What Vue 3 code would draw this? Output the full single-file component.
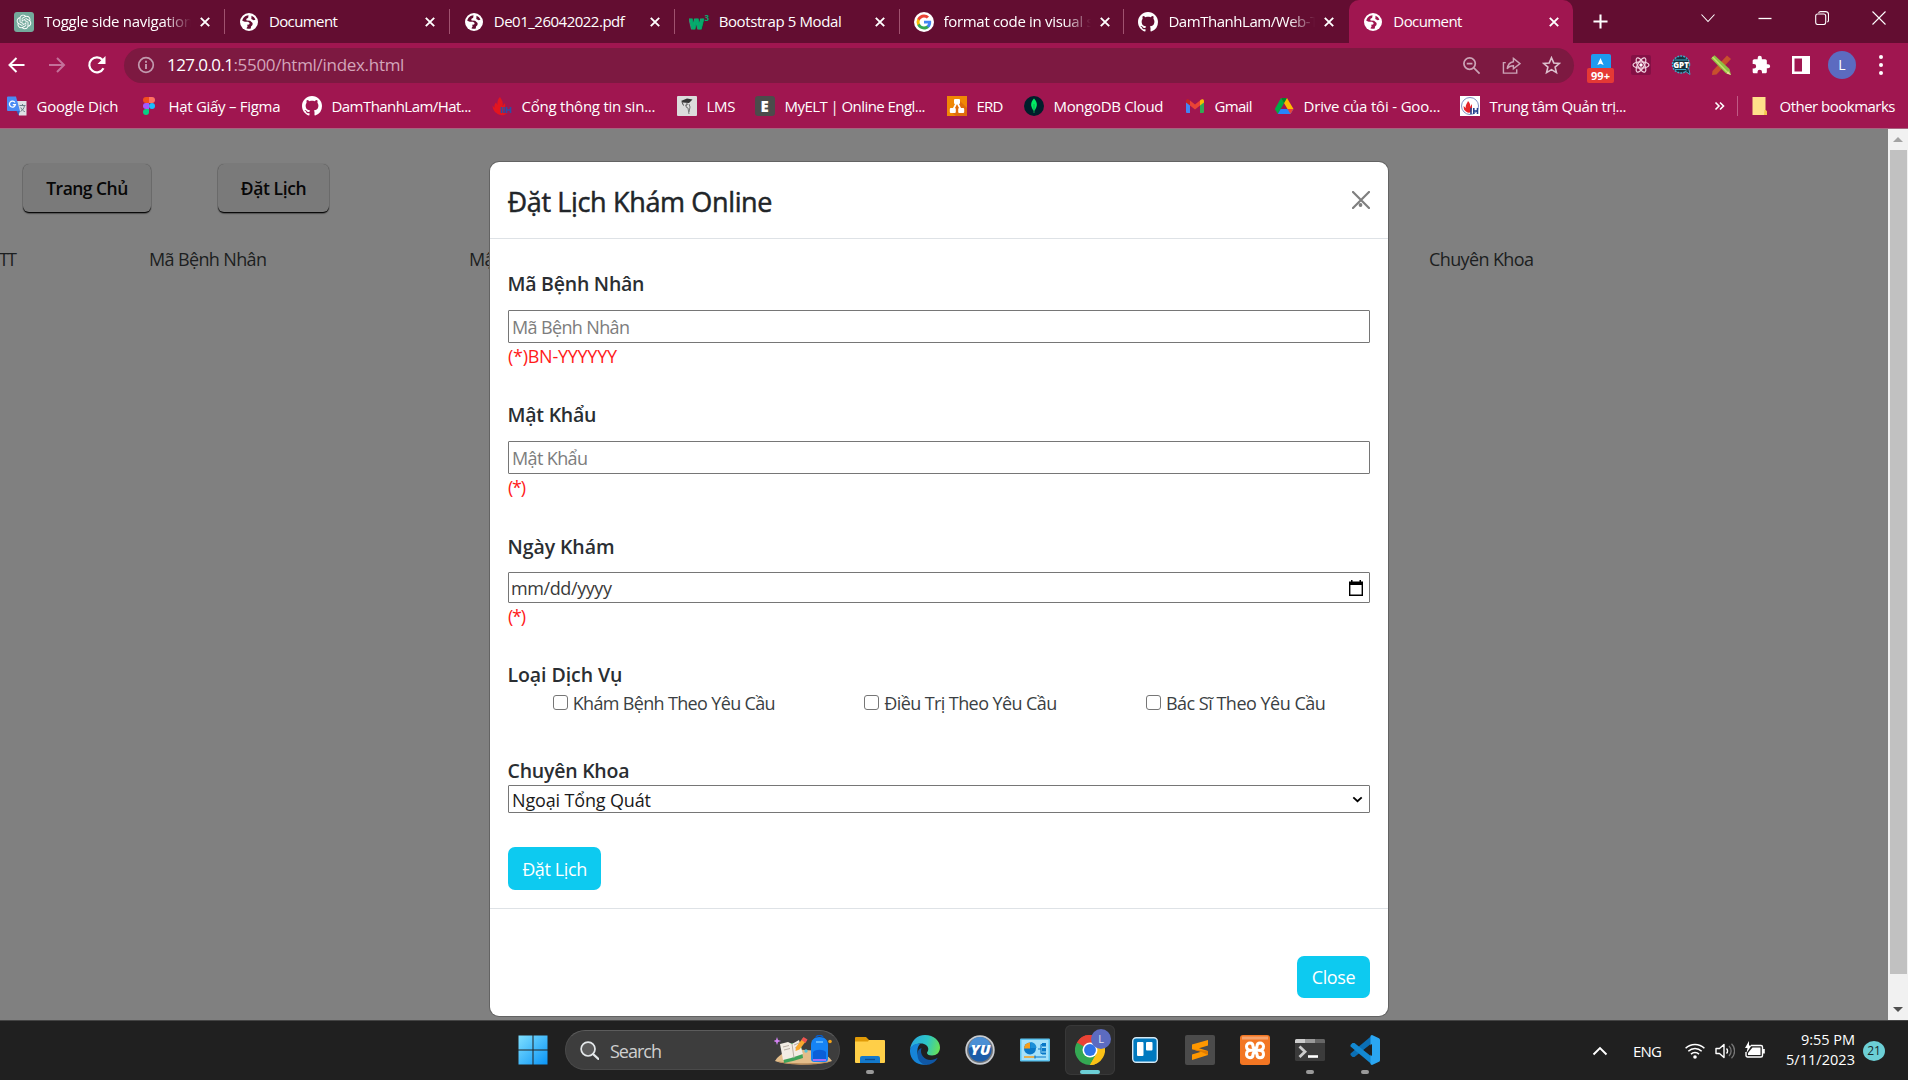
<script setup>
// Spreads or tightens a text run so that it spans the given width in pixels.
const vFit = {
  mounted(el, { value }) {
    const n = Array.from(el.textContent.trim()).length
    if (n < 2 || !value) return
    const natural = el.getBoundingClientRect().width
    el.style.letterSpacing = ((value - natural) / (n - 1)).toFixed(3) + 'px'
  }
}

const icons = {
  globe: ['0 0 18 18', '<circle cx="9" cy="9" r="9" fill="#fff"/><path d="M8.500 2.300C5.300 2.500 2.800 4.800 2.300 7.800l2.500.9 3.200.1 1.700 1.200-.6 1.500-1.900.2.400 1.700-1.200 1.800c1.200.6 3 .7 4.400.3l.2-1.900 1.500-1.500.1-2-2.500-2.300-3.500-.2-.4-1.500 2-1.400z" fill="currentColor"/><path d="M11.500 2.800c1.900.7 3.300 2 3.900 4l-1.800.5-2.300-1.200z" fill="currentColor"/>'],
  openai: ['0 0 34 34', '<rect width="34" height="34" rx="5" fill="#74aa9c"/><g transform="translate(4.500 4.500) scale(1.04)"><path fill="#fff" d="M22.2819 9.8211a5.9847 5.9847 0 0 0-.5157-4.9108 6.0462 6.0462 0 0 0-6.5098-2.9A6.0651 6.0651 0 0 0 4.9807 4.1818a5.9847 5.9847 0 0 0-3.9977 2.9 6.0462 6.0462 0 0 0 .7427 7.0966 5.98 5.98 0 0 0 .511 4.9107 6.051 6.051 0 0 0 6.5146 2.9001A5.9847 5.9847 0 0 0 13.2599 24a6.0557 6.0557 0 0 0 5.7718-4.2058 5.9894 5.9894 0 0 0 3.9977-2.9001 6.0557 6.0557 0 0 0-.7475-7.0729zm-9.022 12.6081a4.4755 4.4755 0 0 1-2.8764-1.0408l.1419-.0804 4.7783-2.7582a.7948.7948 0 0 0 .3927-.6813v-6.7369l2.02 1.1686a.071.071 0 0 1 .038.052v5.5826a4.504 4.504 0 0 1-4.4945 4.4944zm-9.6607-4.1254a4.4708 4.4708 0 0 1-.5346-3.0137l.142.0852 4.783 2.7582a.7712.7712 0 0 0 .7806 0l5.8428-3.3685v2.3324a.0804.0804 0 0 1-.0332.0615L9.74 19.9502a4.4992 4.4992 0 0 1-6.1408-1.6464zM2.3408 7.8956a4.485 4.485 0 0 1 2.3655-1.9728V11.6a.7664.7664 0 0 0 .3879.6765l5.8144 3.3543-2.0201 1.1685a.0757.0757 0 0 1-.071 0l-4.8303-2.7865A4.504 4.504 0 0 1 2.3408 7.872zm16.5963 3.8558L13.1038 8.364 15.1192 7.2a.0757.0757 0 0 1 .071 0l4.8303 2.7913a4.4944 4.4944 0 0 1-.6765 8.1042v-5.6772a.79.79 0 0 0-.407-.667zm2.0107-3.0231l-.142-.0852-4.7735-2.7818a.7759.7759 0 0 0-.7854 0L9.409 9.2297V6.8974a.0662.0662 0 0 1 .0284-.0615l4.8303-2.7866a4.4992 4.4992 0 0 1 6.6802 4.66zM8.3065 12.863l-2.02-1.1638a.0804.0804 0 0 1-.038-.0567V6.0742a4.4992 4.4992 0 0 1 7.3757-3.4537l-.142.0805L8.704 5.459a.7948.7948 0 0 0-.3927.6813zm1.0976-2.3654l2.602-1.4998 2.6069 1.4998v2.9994l-2.5974 1.4997-2.6067-1.4997Z"/></g>'],
  w3: ['0 0 20 20', '<text x="0" y="16.500" font-family="Open Sans, sans-serif" font-weight="800" font-size="17" textLength="15" lengthAdjust="spacingAndGlyphs" fill="#04aa6d" stroke="#04aa6d">w</text><text x="15.500" y="9" font-family="Open Sans, sans-serif" font-weight="700" font-size="8" fill="#04aa6d">3</text>'],
  google: ['0 0 32 32', '<circle cx="16" cy="16" r="16" fill="#fff"/><g transform="translate(4 4)"><path fill="#4285F4" d="M23.490 12.270c0-.79-.07-1.540-.19-2.270H12v4.510h6.470c-.29 1.480-1.140 2.730-2.400 3.580v3h3.860c2.260-2.090 3.560-5.170 3.560-8.820z"/><path fill="#34A853" d="M12 24c3.240 0 5.950-1.080 7.930-2.910l-3.860-3c-1.080.72-2.450 1.160-4.070 1.160-3.130 0-5.780-2.110-6.730-4.960H1.290v3.090C3.260 21.300 7.310 24 12 24z"/><path fill="#FBBC05" d="M5.270 14.290A7.170 7.170 0 0 1 4.890 12c0-.8.140-1.570.38-2.290V6.620H1.290a11.860 11.860 0 0 0 0 10.760l3.980-3.090z"/><path fill="#EA4335" d="M12 4.750c1.770 0 3.350.61 4.600 1.800l3.420-3.420C17.950 1.190 15.240 0 12 0 7.310 0 3.260 2.700 1.290 6.620l3.980 3.090C6.220 6.860 8.870 4.750 12 4.750z"/></g>'],
  github: ['0 0 16 16', '<path fill="#fff" d="M8 0C3.58 0 0 3.58 0 8c0 3.540 2.290 6.530 5.470 7.590.4.07.55-.17.55-.38 0-.19-.01-.82-.01-1.490-2.010.37-2.530-.49-2.690-.94-.09-.23-.48-.94-.82-1.130-.28-.15-.68-.52-.01-.53.63-.01 1.080.58 1.230.82.72 1.210 1.870.87 2.330.66.07-.52.28-.87.51-1.070-1.780-.2-3.640-.89-3.640-3.950 0-.87.31-1.590.82-2.150-.08-.2-.36-1.020.08-2.120 0 0 .67-.21 2.200.82.64-.18 1.320-.27 2-.27s1.360.09 2 .27c1.530-1.040 2.200-.82 2.200-.82.44 1.100.16 1.920.08 2.120.51.56.82 1.270.82 2.150 0 3.070-1.870 3.750-3.650 3.950.29.25.54.73.54 1.480 0 1.070-.01 1.930-.01 2.200 0 .21.15.46.55.38A8.010 8.010 0 0 0 16 8c0-4.420-3.580-8-8-8z"/>'],
  translate: ['0 0 20 20', '<path d="M8 5h11.500v14.500H12z" fill="#dfe1e5"/><path d="M0 1.500A1 1 0 0 1 1 .500h8l4 14.500H1a1 1 0 0 1-1-1z" fill="#4a8af4"/><path d="M9.500 15h3.500L11.500 19.500z" fill="#3a5fc0"/><path d="M8 6.500a3 3 0 1 0 .4 2.200H5.800" fill="none" stroke="#fff" stroke-width="1.300"/><path d="M12.500 9.500h6M15.500 8v1.500M17.500 9.500c-.5 3-2 4.800-4 6M13.800 11.500c1 2 2 3.200 4 4.200" fill="none" stroke="#6b7c86" stroke-width="1"/>'],
  figma: ['0 0 20 20', '<path d="M7 1h3v6H7a3 3 0 0 1 0-6z" fill="#f24e1e"/><path d="M10 1h3a3 3 0 0 1 0 6h-3z" fill="#ff7262"/><path d="M7 7h3v6H7a3 3 0 0 1 0-6z" fill="#a259ff"/><circle cx="13" cy="10" r="3" fill="#1abcfe"/><path d="M7 13h3v3a3 3 0 1 1-3-3z" fill="#0acf83"/>'],
  flame: ['0 0 20 20', '<path d="M8 1c2 3 3.500 5.500 2.500 9l2.500-3c1 4-.5 8-2.500 9.500 1.500.8 3 .8 4.500.4-2 3-8 3-10.500.2C2 16 .500 12 .500 9.500l2 2.500C2 9 3 7.500 4 6.500L5.500 9C5 5.500 6 3 8 1z" fill="#e3151f"/><path d="M9.500 11v6M12 11v6M14.500 11v6M18.500 11v6M14.500 14h4" stroke="#2c4fa3" stroke-width="1.600"/>'],
  lms: ['0 0 20 20', '<rect width="20" height="20" rx="1" fill="#dcdcdc"/><path d="M4 5l6-2.500 5.500 1L12 7 6 6.500z" fill="#333"/><path d="M5 6l1.500 3.500" stroke="#444"/><path d="M10 7l-1 4 2 1 1 6M8 9.500l3-1.500M12 8l1 3-1 5" fill="none" stroke="#777" stroke-width="1"/>'],
  elt: ['0 0 20 20', '<rect width="20" height="20" rx="3" fill="#4b4b4b"/><text x="5.600" y="15.500" font-family="Open Sans, sans-serif" font-weight="800" font-size="15" fill="#fff">E</text>'],
  erd: ['0 0 20 20', '<rect width="20" height="20" fill="#f08705"/><path d="M12 4l8 8v8H9l-5-4z" fill="#df6c0c"/><path d="M10 6l-4 8M10 6l4 8" stroke="#fff" stroke-width="1.700"/><rect x="7" y="3" width="6" height="5" rx="1" fill="#fff"/><rect x="2.800" y="12" width="6" height="5" rx="1" fill="#fff"/><rect x="11.200" y="12" width="6" height="5" rx="1" fill="#fff"/>'],
  mongo: ['0 0 20 20', '<circle cx="10" cy="10" r="10" fill="#001e2b"/><path d="M10 2.500c3 3 4.500 7.500 0 12.500-4.500-5-3-9.500 0-12.500z" fill="#00ed64"/><path d="M10 8v9" stroke="#12a150" stroke-width=".9"/>'],
  gmail: ['0 0 20 20', '<path d="M1 5.500v10.200c0 .8.500 1.300 1.300 1.300H5V8.500z" fill="#4285f4"/><path d="M15 8.500V17h2.700c.8 0 1.300-.5 1.300-1.300V5.500z" fill="#34a853"/><path d="M5 4.500l5 4 5-4v5l-5 4-5-4z" fill="#ea4335"/><path d="M1 5.200C1 3 3 2.800 4.200 3.800L5 4.500v5L1 6.500z" fill="#c5221f"/><path d="M19 5.200C19 3 17 2.800 15.800 3.800l-.8.7v5l4-3z" fill="#fbbc04"/>'],
  drive: ['0 0 20 20', '<path d="M7 2h6l6.500 11h-6z" fill="#ffba00"/><path d="M7 2l3 5.200L3.800 18 .800 13z" fill="#00ac47"/><path d="M6.700 13h12.800l-3 5H3.800z" fill="#2684fc"/><path d="M7 2h6l-3 5.200z" fill="#00832d"/><path d="M13.500 13h6l-3 5z" fill="#ea4335"/>'],
  center: ['0 0 20 20', '<rect width="20" height="20" fill="#fff"/><circle cx="10" cy="10" r="8.500" fill="none" stroke="#7f8fc4" stroke-width="1"/><path d="M8 5c2 2 2.500 4 2 6l2-3v4l-1 4c-2 1.500-5 .5-7-2.500L3.500 10l2.300 2C5.500 8.500 7 8 8 5z" fill="#e3252b"/><path d="M11 12v6M13.800 12v6M17.500 12v6M13.800 15h3.700" stroke="#23408f" stroke-width="1.600"/>'],
  folder: ['0 0 20 20', '<path d="M2.500 1h13v13l1.500 2v3h-14.500z" fill="#ffe08a"/><path d="M14.500 14h1.500l1 2v3h-3z" fill="#f3c74d"/>'],
  back: ['0 0 20 20', '<path d="M17.500 10H2.500M9.500 3l-7 7 7 7" fill="none" stroke="#fff" stroke-width="2"/>'],
  fwd: ['0 0 20 20', '<path d="M2 10h15M10 3l7 7-7 7" fill="none" stroke="#c4719a" stroke-width="2"/>'],
  reload: ['0 0 20 20', '<path d="M16.500 13.200A7.500 7.500 0 1 1 15.600 5" fill="none" stroke="#fff" stroke-width="2.200"/><path d="M18.500 1v8h-8z" fill="#fff"/>'],
  info: ['0 0 20 20', '<circle cx="10" cy="10" r="7.300" fill="none" stroke="#c29aae" stroke-width="1.700"/><path d="M10 9v5M10 5.800v1.900" stroke="#c29aae" stroke-width="1.900"/>'],
  zoomout: ['0 0 20 20', '<circle cx="8" cy="8" r="6" fill="none" stroke="#cba3b6" stroke-width="1.800"/><path d="M12.500 12.500l6 6M5 8h6" stroke="#cba3b6" stroke-width="1.800"/>'],
  share: ['0 0 20 20', '<path d="M4 7H1.500v11h14v-4" fill="none" stroke="#cba3b6" stroke-width="1.500"/><path d="M12 2.500l7 5.500-7 5.500v-3.300c-3 0-5 1-6.500 3.300C6 9.500 8 6.500 12 6z" fill="none" stroke="#cba3b6" stroke-width="1.500"/>'],
  star: ['0 0 20 20', '<path d="M10 1.800l2.400 5.500 5.900.5-4.500 3.900 1.400 5.800L10 14.400l-5.200 3.100 1.400-5.800-4.500-3.900 5.900-.5z" fill="none" stroke="#dcc0cd" stroke-width="1.700"/>'],
  react: ['0 0 20 20', '<rect width="20" height="20" rx="2" fill="#841045"/><g fill="none" stroke="#f3d5e2" stroke-width="1.200"><ellipse cx="10" cy="10" rx="8" ry="3.200"/><ellipse cx="10" cy="10" rx="8" ry="3.200" transform="rotate(60 10 10)"/><ellipse cx="10" cy="10" rx="8" ry="3.200" transform="rotate(120 10 10)"/></g><circle cx="10" cy="10" r="1.700" fill="#fff"/>'],
  gpt: ['0 0 20 20', '<circle cx="10" cy="9.500" r="8.500" fill="#17303c" stroke="#3fa6c4" stroke-width="1.500" stroke-dasharray="2 1"/><path d="M4 5h12M4 14.500h11M14 16l5 3.500-1-5" stroke="#3fa6c4" fill="#17303c"/><text x="2.200" y="13" font-family="Open Sans, sans-serif" font-weight="800" font-size="8" fill="#fff">GPT</text>'],
  pencil: ['0 0 20 20', '<path d="M16 .500l4 3.500L5.500 19.500 1 20l.5-4z" fill="#c8502d"/><path d="M0 3.500L3.500.300 18.500 14l1.500 6-5.500-2z" fill="#8fc043"/><path d="M1.500 2L16 17" stroke="#c7df6c" stroke-width="1.500"/><path d="M17 16l3 4-4.500-1.500z" fill="#eedb9a"/>'],
  puzzle: ['0 0 24 24', '<path fill="#fff" d="M20.500 11H19V7c0-1.100-.9-2-2-2h-4V3.500a2.500 2.500 0 0 0-5 0V5H4c-1.100 0-2 .9-2 2v3.800h1.500a2.700 2.700 0 0 1 0 5.400H2V20c0 1.100.9 2 2 2h3.800v-1.500a2.700 2.700 0 0 1 5.400 0V22H17c1.100 0 2-.9 2-2v-4h1.500a2.500 2.500 0 0 0 0-5z"/>'],
  side: ['0 0 20 20', '<path d="M1 1h18v18H1zM3.500 3.500v13h7.500v-13z" fill="#fff" fill-rule="evenodd"/>'],
  win: ['0 0 30 30', '<defs><linearGradient id="wg" x1="0" y1="0" x2="1" y2="1"><stop offset="0" stop-color="#7fe0ff"/><stop offset="1" stop-color="#0a94f5"/></linearGradient></defs><path d="M.500.500h14v14h-14zM15.500.500h14v14h-14zM.500 15.500h14v14h-14zM15.500 15.500h14v14h-14z" fill="url(#wg)"/>'],
  explorer: ['0 0 30 30', '<path d="M0 3a1 1 0 0 1 1-1h10l3 3v5H0z" fill="#e09a07"/><path d="M0 6.500h13L14 5h15a1 1 0 0 1 1 1v21a1 1 0 0 1-1 1H1a1 1 0 0 1-1-1z" fill="#ffcf48"/><path d="M5 28v-5a2 2 0 0 1 2-2h16a2 2 0 0 1 2 2v5z" fill="#1379cc"/><path d="M10 24.500h10" stroke="#0b4c8f" stroke-width="1.300"/>'],
  edge: ['0 0 30 30', '<defs><linearGradient id="eg" x1="0" y1=".3" x2="1" y2=".5"><stop offset="0" stop-color="#2aa7e0"/><stop offset=".55" stop-color="#2cc6c6"/><stop offset="1" stop-color="#66e05a"/></linearGradient></defs><path d="M0 14.500C1 6 7 0 15 0c9 0 15 6 15 12.500 0 5-3.500 8-8 8-3.500 0-5-1.500-5-2.500s1.300-1.500 1.300-4c0-3-3-5.500-7.300-5.500C6 8.500 1.500 11 0 14.500z" fill="url(#eg)"/><path d="M0 15c.5-4 5-7 10.500-6.500C8 10.500 7 14 7.500 18c.7 5 4.500 9.500 10 11.300C8 31.500-.500 25 0 15z" fill="#1684d8"/><path d="M11.500 13c-2 6 2.500 12 9 12 3 0 5.500-1.200 7.200-2.200C25.500 27 21 30 16 30 10 29 7 24 7.500 18c.2-2.500 2-4.500 4-5z" fill="#0f57a5"/>'],
  yu: ['0 0 30 30', '<circle cx="15" cy="15" r="14.700" fill="#c9ccd0"/><circle cx="15" cy="15" r="13" fill="#6f747a"/><circle cx="15" cy="15" r="11.500" fill="#1c5ca8"/><path d="M4 13a11 11 0 0 1 22 0c-7-3-15-3-22 0z" fill="#4b8fd4"/><text x="5.500" y="20" font-family="Open Sans, sans-serif" font-weight="800" font-style="italic" font-size="14" textLength="20" lengthAdjust="spacingAndGlyphs" fill="#fff">YU</text>'],
  panel: ['0 0 30 30', '<rect y="3.500" width="30" height="23" rx="1" fill="#5cc3ef"/><rect x="1.500" y="5" width="27" height="20" fill="#a5e1fa"/><circle cx="10" cy="13.500" r="6" fill="#0a78c8"/><path d="M10.500 13V7a6 6 0 0 1 6 6z" fill="#1c8fd8"/><path d="M10 13.500H4a6 6 0 0 1 6-6z" fill="#f59e1c"/><path d="M18 14h3M21 9.500v9M21 9.500h2M21 18.500h2" stroke="#0a78c8" stroke-width="1.200" fill="none"/><path d="M22 8h4v3.500h-4zM22 13h4v3.500h-4zM22 17.500h4v2h-4z" fill="#0a78c8"/><path d="M4 22h11" stroke="#f59e1c" stroke-width="1.500"/><path d="M15 22h11M15 20.500v3" stroke="#0a78c8" stroke-width="1.200"/>'],
  chrome: ['0 0 48 48', '<path d="M24 24L3.200 12A24 24 0 0 1 44.800 12z" fill="#ea4335"/><path d="M24 24l20.800-12A24 24 0 0 1 24 48z" fill="#fbc116"/><path d="M24 24v24A24 24 0 0 1 3.200 12z" fill="#34a853"/><path d="M24 12h20.800L34.400 30z" fill="#fbc116"/><path d="M34.400 30L24 48 13.600 30z" fill="#34a853"/><path d="M34.400 30L24 48c4 0 8-1 11-3l6-9 3.800-10-6-5z" fill="#fbc116"/><path d="M3.200 12l10.400 18L24 12z" fill="#34a853"/><path d="M3.200 12h0L13.600 18 24 12h20.800A24 24 0 0 0 3.200 12z" fill="#ea4335"/><circle cx="24" cy="24" r="12" fill="#fff"/><circle cx="24" cy="24" r="9.500" fill="#2f74e8"/>'],
  trello: ['0 0 30 30', '<rect x="2.700" y="2.700" width="24.600" height="24.600" rx="3.500" fill="#0079bf" stroke="#d5e8f4" stroke-width="1.400"/><rect x="7" y="7" width="6.500" height="14" rx="1" fill="#fff"/><rect x="16" y="7" width="6.500" height="8.500" rx="1" fill="#fff"/>'],
  sublime: ['0 0 30 30', '<rect width="30" height="30" rx="2" fill="#4b4b4b"/><path d="M7 9.500L23 5v5.500l-9 2.700 9 2.800v4L7 25v-5.500l9-2.700-9-2.500z" fill="#ff9800"/><path d="M7 14.300L23 16v4l-7-3.200z" fill="#e27c00"/>'],
  xampp: ['0 0 30 30', '<rect width="30" height="30" rx="3" fill="#f37623"/><path d="M2 1.500h26v3H2z" fill="#f7a36c"/><path d="M15 15.300h3.500M11.500 15.300H15M11.500 15.300c-3.500 0-5-1.800-5-3.800S8 8 10 8s3 1.500 3 3.300c0 1.200.8 1.700 2 1.700s2-.5 2-1.700C17 9.500 18 8 20 8s3.500 1.500 3.500 3.500-1.500 3.800-5 3.800c3.500 0 5 1.800 5 3.900s-1.500 3.500-3.500 3.500-3-1.500-3-3.300c0-1.200-.8-1.700-2-1.700s-2 .5-2 1.700c0 1.800-1 3.300-3 3.300s-3.500-1.500-3.500-3.500 1.500-3.900 5-3.900z" fill="none" stroke="#fff" stroke-width="3"/>'],
  terminal: ['0 0 30 30', '<rect y="4" width="30" height="22" rx="1.500" fill="#3b3b3b"/><path d="M1.500 4H10v4H0V5.500A1.500 1.500 0 0 1 1.500 4z" fill="#ccc"/><path d="M10 4h10v4H10z" fill="#999"/><path d="M20 4h8.500A1.500 1.500 0 0 1 30 5.500V8H20z" fill="#666"/><path d="M4.500 11.500l5.500 5.300-5.500 5.300" fill="none" stroke="#ccc" stroke-width="2.800"/><path d="M13 21.500h10" stroke="#fff" stroke-width="2.600"/>'],
  vscode: ['0 0 30 30', '<path d="M22 .500L22 8 4.500 22 2.500 22 .500 20 .500 18.500z" fill="#0b6fb5"/><path d="M.500 11.500L.500 10 2.500 8h2L22 22v7.500z" fill="#1389d2"/><path d="M22 0l7 3.200a2 2 0 0 1 1 1.800v20a2 2 0 0 1-1 1.800L22 30c-1 0-1.500-.8-1.500-1.500v-27C20.500.8 21 0 22 0z" fill="#2aa6f2"/><path d="M22 9v12l-8-6z" fill="#202020"/>'],
  find: ['0 0 20 20', '<circle cx="8.500" cy="8.500" r="7.300" fill="#5a5a5a" stroke="#e4e8ea" stroke-width="1.800"/><path d="M13.800 13.800l5.500 5" stroke="#e4e8ea" stroke-width="2.200" stroke-linecap="round"/>'],
  art: ['0 0 60 30', '<path d="M1 26c6-10 18-12 30-11 12 0 22 3 27 11-10 4-46 5-57 0z" fill="#e3bd8a"/><path d="M3 26c12 3 42 3 54 0-10 5-44 5-54 0z" fill="#b98d5c"/><path d="M8 10l11-2 8 1 2 14-10 3-9 2z" fill="#3fa35b"/><path d="M6 9l8-2 4 2 7-4 4 14-9 3-3 1-8 2z" fill="#f2ece4"/><path d="M18 9l2 14M9 12l6-1.500M10 15l6-1.500M20 10l5-2M21 13l5-2" stroke="#b9afa5" stroke-width="1"/><path d="M22 12l7-9 3.500 2.500-7 9-4 1.500z" fill="#f8a72c"/><path d="M27.500 5l2-3 4 2.500-2 3.500z" fill="#ef5350"/><path d="M37 10c0-5 3-8 8.500-8S54 5 54 10v14c0 2-1.500 3-3 3H40c-1.500 0-3-1-3-3z" fill="#1583f5"/><path d="M42 2.500c1-3 6-3 7 0" fill="none" stroke="#0b5bc2" stroke-width="1.500"/><path d="M39 17c3-3 10-3 13 0v7H39z" fill="#0b5fd8"/><path d="M39 24h13v2H39z" fill="#a36bf5"/><path d="M42 7h7" stroke="#73c4ff" stroke-width="1.500"/><path d="M3 2l1 3 3 1-3 1-1 3-1-3-3-1 3-1z" fill="#d583f5"/><circle cx="56" cy="6.500" r="1.800" fill="#f6a417"/><circle cx="32" cy="16" r="1.700" fill="#58c4d8"/>'],
  up: ['0 0 20 20', '<path d="M3.500 13.500L10 7l6.500 6.500" fill="none" stroke="#fff" stroke-width="1.900"/>'],
  wifi: ['0 0 20 20', '<g fill="none" stroke="#fff" stroke-width="1.500"><path d="M.600 7.300a13.300 13.300 0 0 1 18.800 0"/><path d="M3.300 10.200a9.500 9.500 0 0 1 13.400 0"/><path d="M6 13.100a5.700 5.700 0 0 1 8 0"/></g><circle cx="10" cy="16" r="1.800" fill="#fff"/>'],
  sound: ['0 0 20 20', '<path d="M1 7.500h3.500L9 3.500v13L4.500 12.500H1z" fill="none" stroke="#fff" stroke-width="1.400" stroke-linejoin="round"/><path d="M11.500 7.500a3.500 3.500 0 0 1 0 5" fill="none" stroke="#fff" stroke-width="1.400"/><path d="M14 5a7 7 0 0 1 0 10M16.500 2.800a10 10 0 0 1 0 14.400" fill="none" stroke="#777" stroke-width="1.300"/>'],
  battery: ['0 0 20 20', '<path d="M6 4.500h10a1.500 1.500 0 0 1 1.500 1.500v8.500a1.500 1.500 0 0 1-1.500 1.500H2.500A1.500 1.500 0 0 1 1 14.500V11" fill="none" stroke="#fff" stroke-width="1.400"/><path d="M7.500 6.500h8v7.500H3v-2z" fill="#fff"/><path d="M18 8h1.800v4.500H18z" fill="#fff"/><path d="M4 0L0 7h2.500L1.500 12 6.500 4.500H4z" fill="#fff"/>']
}

const tabs = [
  { icon: 'openai', title: 'Toggle side navigation', w: 149, fade: true },
  { icon: 'globe', title: 'Document', w: 69 },
  { icon: 'globe', title: 'De01_26042022.pdf', w: 131 },
  { icon: 'w3', title: 'Bootstrap 5 Modal', w: 123 },
  { icon: 'google', title: 'format code in visual s', w: 150, fade: true },
  { icon: 'github', title: 'DamThanhLam/Web-T', w: 150, fade: true },
  { icon: 'globe', title: 'Document', w: 69, active: true }
]

// slot: distance to the start of the next bookmark
const bookmarks = [
  { icon: 'translate', title: 'Google Dịch', w: 82, slot: 132 },
  { icon: 'figma', title: 'Hạt Giấy – Figma', w: 112, slot: 163 },
  { icon: 'github', title: 'DamThanhLam/Hat...', w: 140, slot: 190 },
  { icon: 'flame', title: 'Cổng thông tin sin...', w: 134, slot: 185 },
  { icon: 'lms', title: 'LMS', w: 29, slot: 78 },
  { icon: 'elt', title: 'MyELT | Online Engl...', w: 141, slot: 192 },
  { icon: 'erd', title: 'ERD', w: 27, slot: 77 },
  { icon: 'mongo', title: 'MongoDB Cloud', w: 110, slot: 161 },
  { icon: 'gmail', title: 'Gmail', w: 38, slot: 89 },
  { icon: 'drive', title: 'Drive của tôi - Goo...', w: 137, slot: 186 },
  { icon: 'center', title: 'Trung tâm Quản trị...', w: 137, slot: 251 }
]

const services = [
  { title: 'Khám Bệnh Theo Yêu Cầu', w: 203 },
  { title: 'Điều Trị Theo Yêu Cầu', w: 173 },
  { title: 'Bác Sĩ Theo Yêu Cầu', w: 160 }
]

const apps = [
  { icon: 'explorer', run: true }, { icon: 'edge' }, { icon: 'yu' }, { icon: 'panel' },
  { icon: 'chrome', active: true }, { icon: 'trello' }, { icon: 'sublime' }, { icon: 'xampp' },
  { icon: 'terminal', run: true }, { icon: 'vscode', run: true }
]
</script>

<template>
  <div class="screen">
    <header class="tabstrip">
      <div v-for="(t, i) in tabs" :key="i" class="tab" :class="{ active: t.active, nosep: i > 4 }">
        <svg class="i20" :class="{ globe: t.icon === 'globe' }" :viewBox="icons[t.icon][0]" v-html="icons[t.icon][1]"></svg>
        <div class="tabtitle" :class="{ fade: t.fade }"><span v-fit="t.w">{{ t.title }}</span></div>
        <svg class="tabx" viewBox="0 0 10 10"><path d="M.8.8l8.400 8.400M9.200.8L.8 9.200" stroke="#fff" stroke-width="1.900" /></svg>
      </div>
      <svg class="plus" viewBox="0 0 16 16"><path d="M8 .500v15M.500 8h15" stroke="#fff" stroke-width="2.200" /></svg>
      <div class="winctl">
        <svg viewBox="0 0 14 14"><path d="M.500 3.500L7 10.500l6.500-7" /></svg>
        <svg viewBox="0 0 14 14"><path d="M.500 7.500h13" stroke-width="1.300" /></svg>
        <svg viewBox="0 0 14 14"><rect x=".7" y="3" width="10" height="10.500" rx="2" /><path d="M3.500 1.800C4 .8 4.500.600 5.500.600h5c2 0 3 1 3 3V9c0 1-.5 1.800-1.200 2" /></svg>
        <svg viewBox="0 0 14 14"><path d="M.500.500l13 13M13.500.500l-13 13" /></svg>
      </div>
    </header>

    <div class="toolbar">
      <svg v-for="n in ['back', 'fwd', 'reload']" :key="n" class="nav" :viewBox="icons[n][0]" v-html="icons[n][1]"></svg>
      <div class="omnibox">
        <svg class="i20" :viewBox="icons.info[0]" v-html="icons.info[1]"></svg>
        <div class="url"><span v-fit="67" class="host">127.0.0.1</span><span v-fit="171">:5500/html/index.html</span></div>
        <svg v-for="n in ['zoomout', 'share', 'star']" :key="n" class="oi" :viewBox="icons[n][0]" v-html="icons[n][1]"></svg>
      </div>
      <div class="exts">
        <div class="ext first"><div class="bluebox"><svg viewBox="0 0 10 10"><path d="M5 1l3.500 8L5 7.500 1.500 9z" fill="#fff" /></svg></div><b>99+</b></div>
        <svg v-for="n in ['react', 'gpt', 'pencil', 'puzzle', 'side']" :key="n" class="ext" :viewBox="icons[n][0]" v-html="icons[n][1]"></svg>
        <div class="avatar">L</div>
        <div class="dots"><i></i><i></i><i></i></div>
      </div>
    </div>

    <nav class="bookmarks">
      <div v-for="b in bookmarks" :key="b.title" class="bm" :style="{ width: b.slot + 'px' }">
        <svg class="i20" :viewBox="icons[b.icon][0]" v-html="icons[b.icon][1]"></svg>
        <span v-fit="b.w">{{ b.title }}</span>
      </div>
      <svg class="more" viewBox="0 0 10 10"><path d="M1 1.500L4.500 5 1 8.500M5.500 1.500L9 5 5.500 8.500" fill="none" stroke="#fff" stroke-width="1.600" /></svg>
      <div class="bmsep"></div>
      <div class="bm">
        <svg class="i20" :viewBox="icons.folder[0]" v-html="icons.folder[1]"></svg>
        <span v-fit="116">Other bookmarks</span>
      </div>
    </nav>

    <main class="view">
      <div class="page">
        <div class="pagebtns">
          <button class="pb first"><span v-fit="82">Trang Chủ</span></button>
          <button class="pb"><span v-fit="66">Đặt Lịch</span></button>
        </div>
        <div class="cols">
          <div class="c1"><span v-fit="18">TT</span></div>
          <div class="c2"><span v-fit="118">Mã Bệnh Nhân</span></div>
          <div class="c3"><span v-fit="76">Mật Khẩu</span></div>
          <div class="c4"><span v-fit="105">Chuyên Khoa</span></div>
        </div>

        <div class="modal">
          <div class="mhead">
            <h4><span v-fit="265">Đặt Lịch Khám Online</span></h4>
            <svg class="mx" viewBox="0 0 18 18"><path d="M1 1l16 16M17 1L1 17" stroke="#7f7f7f" stroke-width="2.200" stroke-linecap="round" /><circle cx="8.500" cy="14" r="1.900" fill="#7f7f7f" /></svg>
          </div>
          <div class="mbody">
            <div class="label"><span v-fit="137">Mã Bệnh Nhân</span></div>
            <div class="field"><span v-fit="118">Mã Bệnh Nhân</span></div>
            <div class="err"><span v-fit="109">(*)BN-YYYYYY</span></div>

            <div class="label gap29"><span v-fit="89">Mật Khẩu</span></div>
            <div class="field"><span v-fit="76">Mật Khẩu</span></div>
            <div class="err"><span v-fit="18">(*)</span></div>

            <div class="label gap30"><span v-fit="107">Ngày Khám</span></div>
            <div class="field date">
              <span v-fit="101">mm/dd/yyyy</span>
              <svg viewBox="0 0 14 16"><path d="M.7 3.500h12.600V15.300H.7z" fill="none" stroke="#000" stroke-width="1.400" /><path d="M0 1.500h14V5H0zM2 0h1.500v2H2zM10.500 0H12v2h-1.500z" /></svg>
            </div>
            <div class="err"><span v-fit="18">(*)</span></div>

            <div class="label gap29"><span v-fit="115">Loại Dịch Vụ</span></div>
            <div class="checks">
              <label v-for="s in services" :key="s.title"><i class="box"></i><span v-fit="s.w">{{ s.title }}</span></label>
            </div>

            <div class="label gap39"><span v-fit="122">Chuyên Khoa</span></div>
            <div class="field select">
              <span v-fit="139">Ngoại Tổng Quát</span>
              <svg viewBox="0 0 12 8"><path d="M1.200 1.500L6 6l4.800-4.500" fill="none" stroke="#000" stroke-width="2.100" /></svg>
            </div>

            <button class="btn submit"><span v-fit="65">Đặt Lịch</span></button>
          </div>
          <div class="mfoot">
            <button class="btn close"><span v-fit="44">Close</span></button>
          </div>
        </div>
      </div>
      <div class="scroll">
        <div class="arr up"></div>
        <div class="thumb"></div>
        <div class="arr down"></div>
      </div>
    </main>

    <footer class="taskbar">
      <svg class="start" :viewBox="icons.win[0]" v-html="icons.win[1]"></svg>
      <div class="search">
        <svg class="find" :viewBox="icons.find[0]" v-html="icons.find[1]"></svg>
        <span v-fit="52">Search</span>
        <svg class="art" :viewBox="icons.art[0]" v-html="icons.art[1]"></svg>
      </div>
      <div class="apps">
        <div v-for="a in apps" :key="a.icon" class="app" :class="{ on: a.active, run: a.run }">
          <svg :viewBox="icons[a.icon][0]" v-html="icons[a.icon][1]"></svg>
          <b v-if="a.active">L</b>
          <i v-if="a.active || a.run"></i>
        </div>
      </div>
      <div class="tray">
        <svg class="i20 chev" :viewBox="icons.up[0]" v-html="icons.up[1]"></svg>
        <div class="lang"><span v-fit="29">ENG</span></div>
        <svg v-for="n in ['wifi', 'sound', 'battery']" :key="n" class="i20 sys" :viewBox="icons[n][0]" v-html="icons[n][1]"></svg>
        <div class="clock"><span v-fit="54">9:55 PM</span><span v-fit="69">5/11/2023</span></div>
        <div class="count">21</div>
      </div>
    </footer>
  </div>
</template>

<style>
body { margin: 0; overflow: hidden; }
</style>

<style scoped>
* { box-sizing: border-box; }
.screen { width: 1908px; height: 1080px; display: flex; flex-direction: column; overflow: hidden; font-family: "Open Sans", "Noto Sans", sans-serif; font-size: 15px; color: #fff; }
span { display: inline-block; white-space: nowrap; }
svg { display: block; flex: none; }
button { font-family: inherit; }
.i20 { width: 20px; height: 20px; }

.tabstrip { height: 43px; flex: none; background: #630d31; display: flex; align-items: center; }
.tab { width: 224.900px; height: 43px; display: flex; align-items: center; padding-left: 14px; background: linear-gradient(#a0526f, #a0526f) right center / 1px 25px no-repeat; flex: none; font-size: 15px; }
.tab.nosep { background: none; }
.tab.active { width: 224px; background: #a01650; border-radius: 10px 10px 0 0; }
.globe { padding: 1px; color: #630d31; }
.active .globe { color: #a01650; }
.tabtitle { width: 147px; margin: -2px 0 0 10px; overflow: hidden; line-height: 24px; white-space: nowrap; }
.tabtitle.fade { mask-image: linear-gradient(90deg, #000 82%, transparent 100%); }
.tabx { width: 10px; height: 10px; margin-left: 9px; }
.plus { width: 15px; height: 15px; margin-left: 20px; }
.winctl { display: flex; gap: 43px; margin-left: 93px; margin-top: -7px; }
.winctl svg { width: 14px; height: 14px; fill: none; stroke: #fff; stroke-width: 1.100; }

.toolbar { height: 43px; flex: none; background: #a01650; display: flex; align-items: center; padding-left: 7px; }
.nav { width: 20px; height: 20px; margin-right: 20px; }
.omnibox { margin-left: -3px; width: 1450px; height: 35px; border-radius: 18px; background: #7d1941; display: flex; align-items: center; padding: 0 13px 0 12px; margin-top: 1px; }
.url { flex: 1; margin-left: 11px; font-size: 17px; line-height: 24px; color: #d3a5b9; white-space: nowrap; }
.host { color: #fff; }
.oi { width: 19px; height: 19px; margin-left: 21px; }
.exts { display: flex; align-items: center; margin-left: 13px; }
.ext { width: 20px; height: 20px; margin-right: 20px; }
.ext.first { width: 27px; height: 29px; margin: 8px 17px 0 0; display: flex; flex-direction: column; align-items: center; }
.bluebox { width: 20px; height: 14px; flex: none; background: #1d9bf0; border-radius: 2px 2px 0 0; display: flex; justify-content: center; padding-top: 3px; }
.bluebox svg { width: 9px; height: 9px; }
.ext b { width: 27px; height: 15px; flex: none; background: #e53935; border-radius: 2px; font-size: 11px; line-height: 15px; text-align: center; }
.avatar { width: 28px; height: 28px; margin-left: -3px; border-radius: 50%; background: #5c6bc0; font-size: 14px; line-height: 28px; text-align: center; }
.dots { margin-left: 23px; display: flex; flex-direction: column; gap: 4px; }
.dots i { width: 4px; height: 4px; background: #fff; border-radius: 50%; }

.bookmarks { height: 43px; flex: none; background: #a01650; border-bottom: 1px solid #a7637f; display: flex; align-items: center; padding: 0 0 2px 7px; font-size: 15px; line-height: 24px; }
.bm { display: flex; align-items: center; gap: 10px; flex: none; }
.bm span { margin-left: -0.500px; }
.more { width: 11px; height: 10px; margin-left: 3px; margin-top: -1px; }
.bmsep { width: 1px; height: 20px; background: #c05a85; margin: 0 12px 0 12px; }

.view { height: 891px; flex: none; display: flex; background: #808080; }
.page { position: relative; width: 1888px; height: 891px; background: #808080; overflow: hidden; color: #111315; }
.pagebtns { display: flex; gap: 67px; padding: 35px 0 0 23px; }
.pb { height: 48px; width: 111px; padding: 0; background: #7a7a7a; border: 0; border-radius: 6px; box-shadow: 0 2px 2px -1px #000, 0 1px 1px #1c1c1c, 0 0 1px #4c4c4c; font-size: 17.500px; font-weight: 600; color: #070707; line-height: 46px; }
.pb.first { width: 128px; }
.cols { display: flex; font-size: 18px; line-height: 26px; margin-top: 34px; color: #1c1e20; }
.cols > div { flex: none; }
.c1 { width: 150px; margin-left: -1px; }
.c2 { width: 320px; }
.c3 { width: 960px; }

.modal { position: absolute; left: 490px; top: 33px; width: 898px; height: 854px; background: #fff; border-radius: 9px; box-shadow: 0 0 0 1px #636363; color: #212529; }
.mhead { height: 77px; border-bottom: 1px solid #dee2e6; display: flex; justify-content: space-between; align-items: center; padding: 0 18px; }
h4 { margin: 3px 0 0 -0.500px; font-size: 27px; font-weight: 500; line-height: 34px; -webkit-text-stroke: 0.500px #212529; }
.mx { width: 18px; height: 18px; }
.mbody { padding: 29px 18px 18px; height: 669px; }
.label { height: 30px; line-height: 32px; font-size: 19.500px; font-weight: 600; color: #2a2e32; }
.label span { margin-left: -0.500px; }
.gap29 { margin-top: 29px; }
.gap30 { margin-top: 30px; }
.gap39 { margin-top: 39px; }
.field { height: 33px; margin-top: 12px; border: 1px solid #767676; border-radius: 1px; display: flex; align-items: center; padding-left: 3px; font-size: 18px; line-height: 26px; color: #7d7d7d; }
.err { height: 27px; line-height: 27px; font-size: 18px; color: #ff1a1a; }
.date { height: 31px; margin-top: 11px; padding: 0 6px 0 2px; justify-content: space-between; color: #3a3a3a; }
.date svg { width: 14px; height: 16px; }
.checks { height: 27px; display: flex; justify-content: space-around; font-size: 18px; line-height: 27px; color: #3b3f43; }
.checks label { display: flex; align-items: center; gap: 5px; }
.checks span { margin-top: 1px; }
.box { width: 15px; height: 15px; margin-top: -1px; border: 1px solid #767676; border-radius: 3px; }
.select { height: 28px; margin-top: 0; padding: 0 6px 0 3px; justify-content: space-between; color: #1a1a1a; }
.select span { margin-top: 1px; }
.select svg { width: 11px; height: 7px; }
.btn { border: 0; padding: 0; border-radius: 7px; background: #0dcaf0; color: #fff; font-size: 18px; line-height: 26px; display: block; }
.submit { width: 93px; height: 43px; margin-top: 34px; }
.mfoot { height: 108px; border-top: 1px solid #dee2e6; display: flex; justify-content: flex-end; align-items: flex-end; padding: 0 18px 18px; }
.close { width: 73px; height: 42px; }

.scroll { width: 20px; background: #f1f1f1; display: flex; flex-direction: column; align-items: center; padding: 8px 0; }
.arr { width: 0; height: 0; border: 5px solid transparent; flex: none; }
.arr.up { border-bottom-color: #a3a3a3; border-top: 0; }
.arr.down { border-top-color: #505050; border-bottom: 0; }
.thumb { width: 17px; height: 824px; margin: 8px 0 auto 1px; background: #c1c1c1; }

.taskbar { flex: 1; background: #202020; border-top: 1px solid #444; display: flex; align-items: flex-start; }
.start { width: 30px; height: 30px; margin: 14px 0 0 518px; }
.search { width: 275px; height: 40px; margin: 9px 0 0 17px; border-radius: 20px; background: #3d3d3d; border: 1px solid #4a4a4a; border-top-color: #5c5c5c; display: flex; align-items: center; padding: 0 5px 0 14px; font-size: 18px; line-height: 26px; color: #cfcfcf; }
.find { width: 19px; height: 19px; }
.search span { margin: 1px 0 0 11px; }
.art { width: 60px; height: 30px; margin-left: auto; }
.apps { display: flex; gap: 5px; margin: 4px 0 0 5px; }
.app { position: relative; width: 50px; height: 50px; display: flex; flex-direction: column; align-items: center; padding-top: 10px; border-radius: 6px; }
.app svg { width: 30px; height: 30px; }
.app.on { background: #2e2e2e; box-shadow: inset 0 0 0 1px #383838; }
.app b { position: absolute; left: 26px; top: 4px; width: 20px; height: 20px; border-radius: 50%; background: #5c6bc0; color: #e2e4f2; font-weight: 400; font-size: 11px; line-height: 20px; text-align: center; }
.app i { width: 8px; height: 4px; border-radius: 2px; background: #9a9a9a; margin-top: 5px; }
.app.on i { width: 20px; background: #6ccfd6; }
.tray { display: flex; align-items: center; height: 59px; margin-left: 200px; font-size: 15px; }
.chev { margin-right: 23px; }
.lang { width: 52px; font-size: 15px; }
.sys { margin-right: 10px; }
.clock { width: 80px; margin-top: -1px; display: flex; flex-direction: column; align-items: flex-end; font-size: 14.500px; line-height: 20px; }
.count { width: 22px; height: 20px; margin-left: 8px; border-radius: 50%; background: #6ccfd6; color: #17282a; font-size: 12px; line-height: 20px; text-align: center; }
</style>
